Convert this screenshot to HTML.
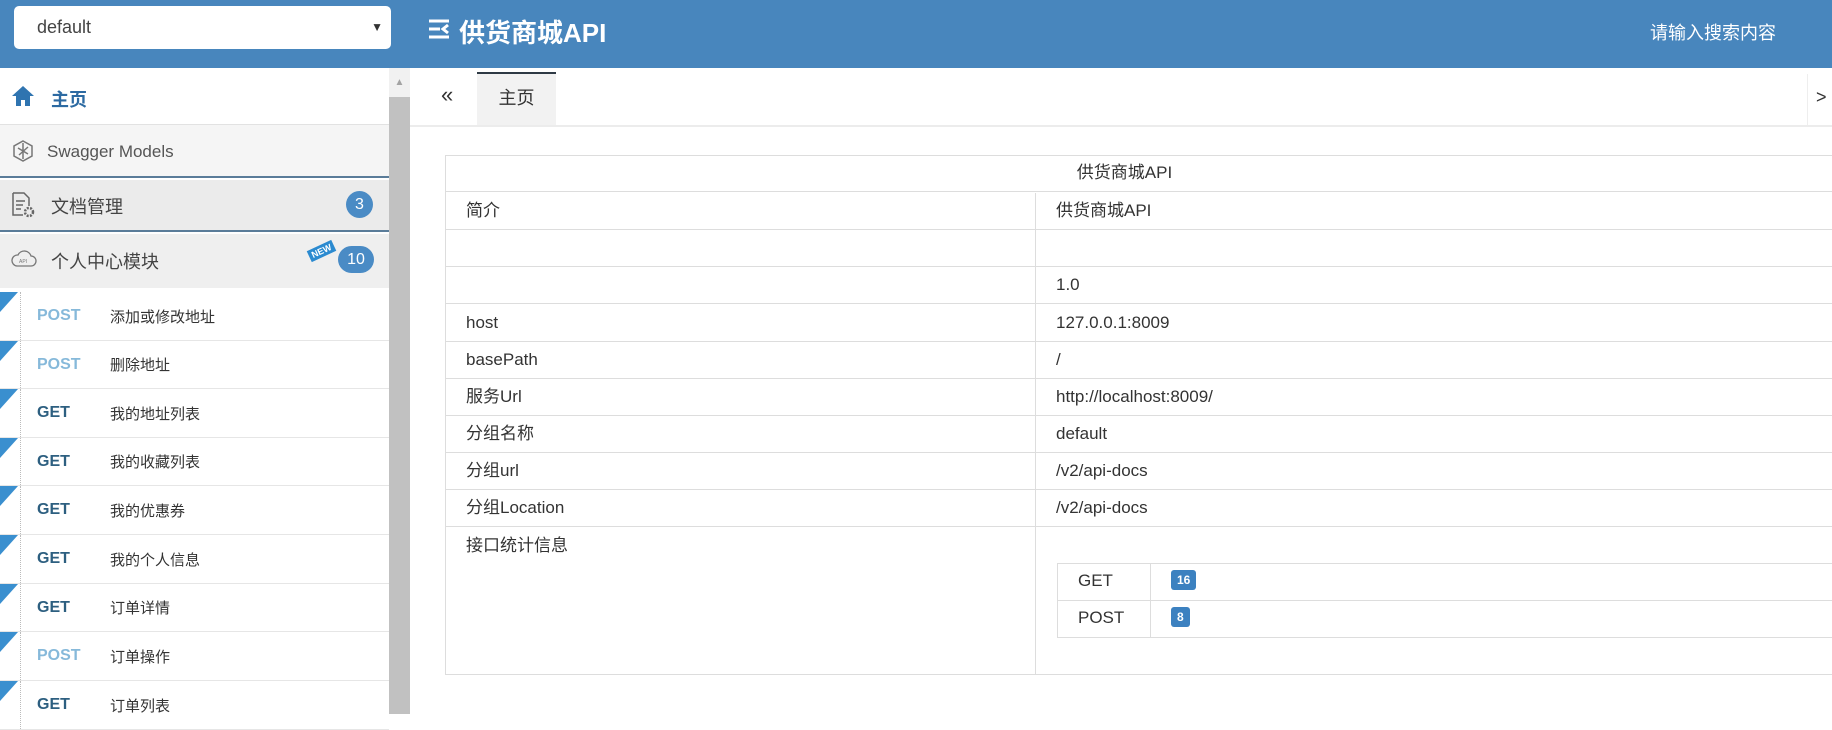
<!DOCTYPE html>
<html><head><meta charset="utf-8"><style>
*{margin:0;padding:0;box-sizing:border-box}
body{width:1832px;height:714px;overflow:hidden;background:#fff;font-family:"Liberation Sans","Noto Sans CJK SC",sans-serif;position:relative;color:#333}
.a{position:absolute}
.hdr{left:0;top:0;width:1832px;height:68px;background:#4886bd}
.sel{left:14px;top:6px;width:377px;height:43px;background:#fff;border-radius:5px;font-size:18px;color:#444;padding:0 0 0 23px;line-height:43px}
.sb{left:0;top:68px;width:389px;height:646px;background:#fff}
.it{left:0;width:389px;font-size:18px;color:#555}
.sub{left:0;width:389px;border-bottom:1px solid #e6e6e6;background:#fff}
.sub .m{position:absolute;left:37px;top:0;bottom:0;display:flex;align-items:center;font-weight:bold;font-size:16px}
.sub .t{position:absolute;left:110px;top:0;bottom:0;display:flex;align-items:center;font-size:15px;color:#333}
.sub .rb{position:absolute;left:0;top:0;width:0;height:0;border-top:20px solid #3a8fcf;border-right:18px solid transparent}
.sub .dl{position:absolute;left:20px;top:0;bottom:0;border-left:1px dotted #bbb}
.post{color:#86b9da}.get{color:#2d5f80}
.r{position:absolute;left:445px;width:1387px;height:37px;border-bottom:1px solid #ddd;font-size:17px;line-height:36px}
.r .l{position:absolute;left:21px;top:0}.r .v{position:absolute;left:611px;top:0}
.bd{background:#3c81c0;color:#fff;font-weight:bold;font-size:12px;border-radius:3px;padding:3px 6px}
</style></head><body>
<div class="a hdr"></div>
<div class="a sel">default<span style="position:absolute;right:8px;top:0;font-size:12px;color:#333">▼</span></div>
<svg class="a" style="left:428px;top:18px" width="24" height="22" viewBox="0 0 24 22"><path d="M1 3h20M1 11h11M1 19h20M20 7l-5 4 5 4" stroke="#fff" stroke-width="3" fill="none"/></svg>
<div class="a" style="left:459px;top:13px;color:#fff;font-weight:bold;font-size:26px">供货商城API</div>
<div class="a" style="left:1650px;top:19px;color:#fff;font-size:18px">请输入搜索内容</div>

<div class="a sb"></div>
<div class="a" style="left:389px;top:68px;width:21px;height:646px;background:#c1c1c1"></div>
<div class="a" style="left:389px;top:68px;width:21px;height:29px;background:#f1f1f1;color:#a3a3a3;font-size:10px;text-align:center;padding-top:9px">▲</div>

<div class="a it" style="top:72px;height:53px;border-bottom:1px solid #e2e2e2"></div>
<svg class="a" style="left:11px;top:85px" width="24" height="22" viewBox="0 0 24 22"><path d="M12 1L1 11h4v10h5v-6h4v6h5V11h4z" fill="#2f74b0"/></svg>
<div class="a" style="left:51px;top:86px;font-size:18px;font-weight:bold;color:#2c6aa2">主页</div>

<div class="a it" style="top:125px;height:53px;background:#f5f5f5;border-bottom:2px solid #5a7c99"></div>
<svg class="a" style="left:12px;top:140px" width="22" height="22" viewBox="0 0 22 22"><path d="M11 1l9 5v10l-9 5-9-5V6zM6 8l10 6M16 7l-9 8M11 3v16" stroke="#777" stroke-width="1.5" fill="none"/></svg>
<div class="a" style="left:47px;top:142px;font-size:17px;color:#555">Swagger Models</div>

<div class="a it" style="top:180px;height:52px;background:#ebebeb;border-bottom:2px solid #5a7c99"></div>
<svg class="a" style="left:11px;top:192px" width="24" height="26" viewBox="0 0 24 26"><path d="M2 1h11l5 5v8M2 1v22h10M5 9h9M5 13h7M5 17h5" stroke="#666" stroke-width="1.5" fill="none"/><circle cx="18" cy="20" r="4" fill="none" stroke="#666" stroke-width="2.5" stroke-dasharray="2 1.3"/></svg>
<div class="a" style="left:51px;top:193px;font-size:18px;color:#444">文档管理</div>
<div class="a" style="left:346px;top:191px;width:27px;height:27px;border-radius:50%;background:#4a8bc5;color:#fff;font-size:16px;text-align:center;line-height:27px">3</div>

<div class="a it" style="top:234px;height:54px;background:#efefef"></div>
<svg class="a" style="left:11px;top:250px" width="26" height="18" viewBox="0 0 26 18"><path d="M6 16h14a5 5 0 0 0 0-10 7 7 0 0 0-13-1A5 5 0 0 0 6 16z" stroke="#777" stroke-width="1.3" fill="none"/><text x="8" y="13" font-size="5" fill="#777" font-family="Liberation Sans">API</text></svg>
<div class="a" style="left:51px;top:248px;font-size:18px;color:#444">个人中心模块</div>
<div class="a" style="left:308px;top:245px;transform:rotate(-25deg);background:#2b8ad0;color:#fff;font-size:9px;font-weight:bold;padding:1px 3px">NEW</div>
<div class="a" style="left:338px;top:246px;width:36px;height:27px;border-radius:14px;background:#4a8bc5;color:#fff;font-size:16px;text-align:center;line-height:27px">10</div>

<div class="a sub" style="top:292px;height:49px"><div class="rb"></div><div class="dl"></div><span class="m post">POST</span><span class="t">添加或修改地址</span></div>
<div class="a sub" style="top:341px;height:48px"><div class="rb"></div><div class="dl"></div><span class="m post">POST</span><span class="t">删除地址</span></div>
<div class="a sub" style="top:389px;height:49px"><div class="rb"></div><div class="dl"></div><span class="m get">GET</span><span class="t">我的地址列表</span></div>
<div class="a sub" style="top:438px;height:48px"><div class="rb"></div><div class="dl"></div><span class="m get">GET</span><span class="t">我的收藏列表</span></div>
<div class="a sub" style="top:486px;height:49px"><div class="rb"></div><div class="dl"></div><span class="m get">GET</span><span class="t">我的优惠券</span></div>
<div class="a sub" style="top:535px;height:49px"><div class="rb"></div><div class="dl"></div><span class="m get">GET</span><span class="t">我的个人信息</span></div>
<div class="a sub" style="top:584px;height:48px"><div class="rb"></div><div class="dl"></div><span class="m get">GET</span><span class="t">订单详情</span></div>
<div class="a sub" style="top:632px;height:49px"><div class="rb"></div><div class="dl"></div><span class="m post">POST</span><span class="t">订单操作</span></div>
<div class="a sub" style="top:681px;height:49px"><div class="rb"></div><div class="dl"></div><span class="m get">GET</span><span class="t">订单列表</span></div>

<div class="a" style="left:410px;top:125px;width:1422px;height:2px;background:#ececec"></div>
<div class="a" style="left:441px;top:82px;font-size:22px;color:#333">«</div>
<div class="a" style="left:477px;top:72px;width:79px;height:53px;background:#f2f2f2;border-top:2px solid #2f3a45;font-size:18px;text-align:center;line-height:49px">主页</div>
<div class="a" style="left:1807px;top:74px;width:25px;height:51px;border-left:1px solid #eee;font-size:18px;padding:13px 0 0 8px">&gt;</div>

<div class="a" style="left:445px;top:155px;width:1387px;height:520px;border:1px solid #ddd;border-right:none"></div>
<div class="a" style="left:1035px;top:193px;width:1px;height:482px;background:#ddd"></div>
<div class="r" style="top:155px"><span class="a" style="left:0;width:100%;text-align:center;top:0;padding-right:28px;">供货商城API</span></div>
<div class="r" style="top:193px"><span class="l">简介</span><span class="v">供货商城API</span></div>
<div class="r" style="top:230px"></div>
<div class="r" style="top:267px"><span class="v">1.0</span></div>
<div class="r" style="top:305px"><span class="l">host</span><span class="v">127.0.0.1:8009</span></div>
<div class="r" style="top:342px"><span class="l">basePath</span><span class="v">/</span></div>
<div class="r" style="top:379px"><span class="l">服务Url</span><span class="v">http://localhost:8009/</span></div>
<div class="r" style="top:416px"><span class="l">分组名称</span><span class="v">default</span></div>
<div class="r" style="top:453px"><span class="l">分组url</span><span class="v">/v2/api-docs</span></div>
<div class="r" style="top:490px"><span class="l">分组Location</span><span class="v">/v2/api-docs</span></div>
<div class="a" style="left:466px;top:531px;font-size:17px">接口统计信息</div>

<div class="a" style="left:1057px;top:563px;width:775px;height:75px;border:1px solid #ddd;border-right:none"></div>
<div class="a" style="left:1057px;top:600px;width:775px;height:1px;background:#ddd"></div>
<div class="a" style="left:1150px;top:563px;width:1px;height:75px;background:#ddd"></div>
<div class="a" style="left:1078px;top:571px;font-size:17px">GET</div>
<div class="a" style="left:1078px;top:608px;font-size:17px">POST</div>
<div class="a" style="left:1171px;top:571px"><span class="bd">16</span></div>
<div class="a" style="left:1171px;top:608px"><span class="bd">8</span></div>
</body></html>
